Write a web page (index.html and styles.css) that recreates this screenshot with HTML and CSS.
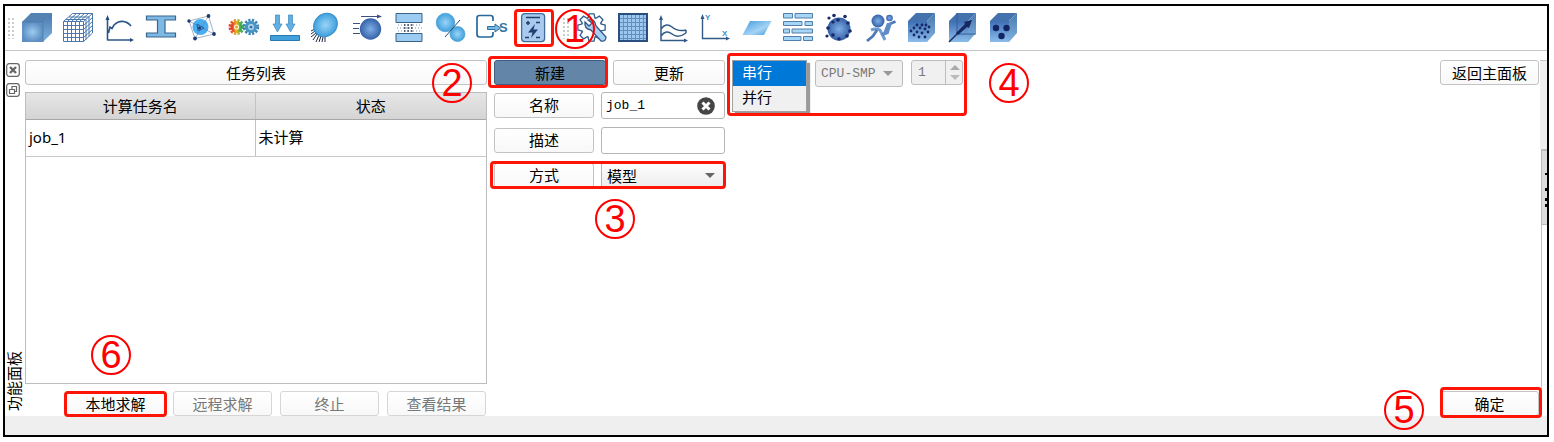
FILE: index.html
```html
<!DOCTYPE html>
<html lang="zh-CN">
<head>
<meta charset="utf-8">
<title>任务列表</title>
<link rel="stylesheet" href="styles.css">
</head>
<body>
<svg class="defs" width="0" height="0" aria-hidden="true">
  <defs>
    <radialGradient id="soft"><stop offset="0" stop-color="#9ccbef"/><stop offset="1" stop-color="#5d8fc2"/></radialGradient>
    <linearGradient id="side" x1="0" y1="0" x2="0" y2="1"><stop offset="0" stop-color="#4878ae"/><stop offset="1" stop-color="#7fb2df"/></linearGradient>
    <radialGradient id="sky"><stop offset="0" stop-color="#9bd4f8"/><stop offset="1" stop-color="#3fa0dc"/></radialGradient>
    <linearGradient id="deep" x1="0" y1="0" x2="0" y2="1"><stop offset="0" stop-color="#3f6fb5"/><stop offset="1" stop-color="#8bbdea"/></linearGradient>
    <radialGradient id="ball"><stop offset="0" stop-color="#7fb0e6"/><stop offset="1" stop-color="#3560a8"/></radialGradient>
    <linearGradient id="plane" x1="0" y1="0" x2="1" y2="1"><stop offset="0" stop-color="#3d9bdc"/><stop offset=".6" stop-color="#a5d3f5"/><stop offset="1" stop-color="#3d9bdc"/></linearGradient>
    <linearGradient id="warm"><stop offset="0" stop-color="#e5402c"/><stop offset=".5" stop-color="#e9b51e"/><stop offset="1" stop-color="#36a85a"/></linearGradient>
    <g id="cube"><path d="M1 8 9 0H28L20 8Z" fill="#4472ac"/><path d="M20 8 28 0V20L20 29Z" fill="url(#side)"/><path d="M1 8H20V29H1Z" fill="url(#deep)"/></g>
    <g id="teeth"><path id="tooth" d="M11.500 6 12.500 1.500H16.500L17.500 6Z"/><use href="#tooth" transform="rotate(45 14.500 14.500)"/><use href="#tooth" transform="rotate(90 14.500 14.500)"/><use href="#tooth" transform="rotate(135 14.500 14.500)"/><use href="#tooth" transform="rotate(180 14.500 14.500)"/><use href="#tooth" transform="rotate(225 14.500 14.500)"/><use href="#tooth" transform="rotate(270 14.500 14.500)"/><use href="#tooth" transform="rotate(315 14.500 14.500)"/><circle cx="14.500" cy="14.500" r="9.500"/></g>
  </defs>
</svg>

<div class="window">
  <header class="toolbar">
    <span class="grip"></span>
    <nav class="tools tools-main">
      <button class="tool" aria-label="几何"><svg viewBox="0 0 30 30"><path d="M0 9 9 0H30L21 9Z" fill="#5482b2"/><path d="M21 9 30 0V20L21 29Z" fill="url(#side)"/><path d="M0 9H21V29H0Z" fill="url(#soft)"/><path d="M0 9H21V29M21 9 30 0" fill="none" stroke="#4a79aa" stroke-width=".7"/></svg></button>
      <button class="tool" aria-label="网格"><svg viewBox="0 0 30 30"><path d="M.5 8.500H20.500V28.500H.5ZM.5 8.500 9.500.5H29.500L20.500 8.500M29.500.5V20L20.500 28.500M4.500 8.500V28.500M8.500 8.500V28.500M12.500 8.500V28.500M16.500 8.500V28.500M.5 12.500H20.500L29.500 4.500M.5 16.500H20.500L29.500 8.500M.5 20.500H20.500L29.500 12.500M.5 24.500H20.500L29.500 16.500M4.500 8.500 13.500.5M8.500 8.500 17.500.5M12.500 8.500 21.500.5M16.500 8.500 25.500.5M3 6.500H23V26.500M6 4H26V23.500" fill="none" stroke="#4878ac"/></svg></button>
      <button class="tool" aria-label="曲线"><svg viewBox="0 0 30 30"><path d="M3.500 27.500V5M3.500 27H28M4.500 20 6 14 8 15.500 10 12C15 7 22 7 27 13" fill="none" stroke="#2c5688" stroke-width="1.600"/><path d="M3.500 2 5.500 7H1.500ZM30 27 26 29V25Z" fill="#234b80"/></svg></button>
      <button class="tool" aria-label="截面"><svg viewBox="0 0 30 30"><path d="M.5 3.500H29.500V7.500H19V20.500H29.500V24.500H.5V20.500H11.500V7.500H.5Z" transform="translate(0 -.5)" fill="#7eb9e4" stroke="#38658d" stroke-width="1.200"/></svg></button>
      <button class="tool" aria-label="质点"><svg viewBox="0 0 30 30"><circle cx="13.500" cy="14" r="8" fill="#47aef2"/><path d="M2 8 21.500 3 27 21 8 25.500ZM2 8 27 21M21.500 3 8 25.500" fill="none" stroke="#657b9d" stroke-width=".6"/><path d="m10 11 7 4-6 3Z" fill="none" stroke="#245eaa"/><g fill="#1e3974"><circle cx="2" cy="8" r="1.700"/><circle cx="21.500" cy="3" r="1.900"/><circle cx="27" cy="21" r="1.900"/><circle cx="8" cy="25.500" r="1.900"/><circle cx="12.500" cy="15" r="1.500"/></g></svg></button>
      <button class="tool" aria-label="装配"><svg viewBox="0 0 30 30"><circle cx="7.500" cy="14" r="6" fill="none" stroke="url(#warm)" stroke-width="4" stroke-dasharray="2 1.140"/><circle cx="7.500" cy="14" r="4.300" fill="#fbf6d8" stroke="url(#warm)" stroke-width="3.400"/><circle cx="7.500" cy="14" r="1.500" fill="#e8a32a"/><circle cx="22" cy="14" r="6.200" fill="none" stroke="#3a84b5" stroke-width="4" stroke-dasharray="2 1.250"/><circle cx="22" cy="14" r="4.500" fill="#b9dcf0" stroke="#4b95c5" stroke-width="3.200"/><circle cx="22" cy="14" r="1.600" fill="#3475aa"/></svg></button>
      <button class="tool" aria-label="载荷"><svg viewBox="0 0 30 30"><path d="M5.500 2H9.500V11H12L7.500 19 3 11H5.500ZM18.500 2H22.500V11H25L20.500 19 16 11H18.500Z" fill="#62afe2" stroke="#3a86bd" stroke-width=".7"/><path d="M.5 22.500H29.500V27.500H.5Z" fill="#42a0dc" stroke="#2977af"/></svg></button>
      <button class="tool" aria-label="约束"><svg viewBox="0 0 30 30"><path d="M4 16 0 18M4 18 0 21M5 20 0 24M6 21 2 27M8 22 5 29M10 23 8 29M12 24 11 29M14 24V29" stroke="#1e2940"/><ellipse cx="14.500" cy="12" rx="12.500" ry="11" transform="rotate(-42 14.500 12)" fill="url(#sky)" stroke="#348dc8"/></svg></button>
      <button class="tool" aria-label="初始条件"><svg viewBox="0 0 30 30"><circle cx="17.500" cy="16" r="10.700" fill="url(#ball)"/><path d="M8 3.500H25M0 10.500H7M0 15.500H6M0 20.500H7" stroke="#3e4f83" stroke-width="1.200"/><path d="m24 1.500 5 2-5 2Z" fill="#3e4f83"/></svg></button>
      <button class="tool" aria-label="接触"><svg viewBox="0 0 30 30"><path d="M2 .5H28V9.500H2ZM2 20.500H28V28.500H2Z" fill="#9dccf2" stroke="#386386"/><path d="M4 12H27M3 15H28M4 18H27" stroke="#7890aa" stroke-dasharray="1 2"/><path d="M10 12H20M10 15H20M10 18H20" stroke="#26364d" stroke-width="1.500" stroke-dasharray="1.500 2"/></svg></button>
      <button class="tool" aria-label="连接"><svg viewBox="0 0 30 30"><circle cx="9.500" cy="9.500" r="9.300" fill="url(#sky)" stroke="#4c9ed0" stroke-width=".7"/><circle cx="21.500" cy="21" r="7.500" fill="url(#sky)" stroke="#4c9ed0" stroke-width=".7"/><path d="M9 24 24 7" stroke="#274a70"/></svg></button>
      <button class="tool" aria-label="输出"><svg viewBox="0 0 30 30"><path d="M16 8V5Q16 2.500 13.500 2.500H2.500Q0 2.500 0 5V21Q0 24 2.500 24H13.500Q16 24 16 21V19" fill="none" stroke="#27699c" stroke-width="1.700"/><path d="M10.500 13.500H18V11L23.500 15 18 19V16.500H10.500Z" fill="#78b8e4" stroke="#31719f"/><text x="22" y="19" class="ico-s">S</text></svg></button>
      <span class="marked">
        <button class="tool" aria-label="任务"><svg viewBox="0 0 30 30"><rect x="3.600" y=".6" width="23" height="28" rx="3" fill="#a7caee" stroke="#416d99" stroke-width="1.300"/><path d="M8 4.500H22M8 10H12M10 8V12M18 9.500H22M7 24.500H11M18 24.500H22" stroke="#243d63" stroke-width="1.500"/><path d="M17 11 10 19.500H14.500L13 25 20 16.500H15.500Z" fill="#233f70"/></svg></button>
        <span class="outline outline-job"></span>
        <span class="step step-1">1</span>
      </span>
    </nav>
    <span class="grip"></span>
    <nav class="tools tools-extra">
      <button class="tool" aria-label="设置"><svg viewBox="0 0 30 30"><use href="#teeth" fill="#315d88" stroke="#315d88" stroke-width="2.600"/><use href="#teeth" fill="#fff"/><path d="M8 9 12 13 15 10 11 7Q18 5 19 13L29 24Q29 29 24 28L14 17Q7 16 8 9Z" fill="#a9d0f3" stroke="#315684" stroke-width="1.300"/></svg></button>
      <button class="tool" aria-label="表格"><svg viewBox="0 0 30 30"><rect x="1" y="1" width="28" height="27" fill="#9cc7ef"/><path d="M5.500 1V28M9.500 1V28M13.500 1V28M17.500 1V28M21.500 1V28M25.500 1V28M1 5.500H29M1 9.500H29M1 13.500H29M1 17.500H29M1 21.500H29M1 25.500H29" stroke="#618fc0"/><rect x="1" y="1" width="28" height="27" fill="none" stroke="#2a4f7e" stroke-width="2"/></svg></button>
      <button class="tool" aria-label="函数"><svg viewBox="0 0 30 30"><path d="M2 4V27.500H27M2 16Q7 9 13 14T27 17M2 23Q7 16 13 21T27 20M27 17V20" fill="none" stroke="#315b86" stroke-width="1.500"/><path d="M2 2 4 7H0ZM29 27.500 25 29.500V25.500Z" fill="#315b86"/></svg></button>
      <button class="tool" aria-label="坐标系"><svg viewBox="0 0 30 30"><path d="M2.500 4V25.500H27" fill="none" stroke="#315b86" stroke-width="1.400"/><path d="M2.500 1 4.500 6H.5ZM30 25.500 26 27.500V23.500Z" fill="#315b86"/><text x="5" y="7" class="ico-axis">Y</text><text x="22" y="23" class="ico-axis">X</text></svg></button>
      <button class="tool" aria-label="平面"><svg viewBox="0 0 30 30"><path d="M8 8H29.500L22 22H.5Z" fill="url(#plane)"/></svg></button>
      <button class="tool" aria-label="墙体"><svg viewBox="0 0 30 30"><g fill="#a5d5f7" stroke="#527fa7"><path d="M.5.5H9.500V5H.5ZM12 .5H29.500V5H12ZM.5 8.500H19V12.500H.5ZM22 8.500H29.500V12.500H22ZM.5 16H6.500V20H.5ZM9 16H29.500V20H9ZM.5 23.500H18V27.500H.5ZM20.500 23.500H29.500V27.500H20.500Z"/></g></svg></button>
      <button class="tool" aria-label="粒子"><svg viewBox="0 0 30 30"><circle cx="15" cy="16" r="11.500" fill="url(#ball)"/><g fill="#1a2a68"><circle cx="10" cy="2.500" r="1.800"/><circle cx="5" cy="5" r="1.600"/><circle cx="21" cy="3.500" r="1.800"/><circle cx="14" cy="7" r="1.800"/><circle cx="9" cy="9" r="1.600"/><circle cx="24" cy="10" r="1.800"/><circle cx="4" cy="15" r="1.800"/><circle cx="26" cy="18" r="1.800"/><circle cx="9" cy="22" r="1.800"/><circle cx="3" cy="23" r="1.600"/><circle cx="15" cy="26" r="1.800"/><circle cx="23" cy="23" r="1.800"/></g></svg></button>
      <button class="tool" aria-label="假人"><svg viewBox="0 0 30 30"><circle cx="12" cy="8" r="6.500" fill="url(#ball)"/><circle cx="23.500" cy="5" r="3.300" fill="url(#ball)"/><path d="M5 17Q10 15 14 17L19 27" fill="none" stroke="#6d9bd2" stroke-width="3"/><path d="M11 17 7 23 1 28M16.500 21.500 20 20 23.500 11 29.500 8.500" fill="none" stroke="#4d79b6" stroke-width="2.800"/><path d="M21 10H26L22.500 21 16 23Z" fill="#5f8cc6"/></svg></button>
      <button class="tool" aria-label="体粒子"><svg viewBox="0 0 30 30"><use href="#cube"/><g fill="#17296a"><circle cx="10" cy="12" r="1.400"/><circle cx="15" cy="12" r="1.400"/><circle cx="19" cy="12" r="1.400"/><circle cx="7" cy="15" r="1.400"/><circle cx="13" cy="15" r="1.400"/><circle cx="18" cy="16" r="1.400"/><circle cx="22" cy="14" r="1.400"/><circle cx="4" cy="18" r="1.400"/><circle cx="10" cy="19" r="1.400"/><circle cx="15" cy="20" r="1.400"/><circle cx="21" cy="19" r="1.400"/><circle cx="7" cy="22" r="1.400"/><circle cx="12" cy="24" r="1.400"/><circle cx="18" cy="24" r="1.400"/></g></svg></button>
      <button class="tool" aria-label="方向"><svg viewBox="0 0 30 30"><use href="#cube"/><path d="M9 0V21H28M9 21 1 29" fill="none" stroke="#355d9b"/><path d="M1 29 15 15" stroke="#1d2b60" stroke-width="1.500"/><path d="m8 20 9-9-1-2 8-2-3 8-2-1-9 8Z" fill="#17275f"/></svg></button>
      <button class="tool" aria-label="多孔"><svg viewBox="0 0 30 30"><use href="#cube"/><g fill="#122464"><circle cx="7" cy="15" r="3.200"/><circle cx="17.500" cy="15" r="3.200"/><circle cx="12.500" cy="23" r="3.200"/></g></svg></button>
    </nav>
  </header>

  <div class="work">
    <aside class="rail">
      <button class="rail-btn" aria-label="关闭"><svg viewBox="0 0 14 14"><rect x=".7" y=".7" width="12.600" height="12.600" rx="2.500"/><path d="m4 4 6 6M10 4 4 10" stroke-width="2.400"/></svg></button>
      <button class="rail-btn" aria-label="浮动"><svg viewBox="0 0 14 14"><rect x=".7" y=".7" width="12.600" height="12.600" rx="2.500"/><path d="M3.500 6.500H8.500V10.500H3.500ZM6 6V3.500H10.500V8.500H9"/></svg></button>
      <span class="rail-title">功能面板</span>
    </aside>

    <section class="jobs">
      <button class="btn">任务列表</button>
      <div class="table-box">
        <table class="job-table">
          <thead><tr><th>计算任务名</th><th>状态</th></tr></thead>
          <tbody><tr><td>job_1</td><td>未计算</td></tr></tbody>
        </table>
      </div>
      <div class="actions">
        <span class="marked">
          <button class="btn btn-fixed">本地求解</button>
          <span class="outline outline-solve"></span>
          <span class="step step-6">6</span>
        </span>
        <button class="btn btn-fixed" disabled>远程求解</button>
        <button class="btn btn-fixed" disabled>终止</button>
        <button class="btn btn-fixed" disabled>查看结果</button>
      </div>
    </section>

    <form class="job-form">
      <div class="modes">
        <span class="marked">
          <button type="button" class="btn btn-active">新建</button>
          <span class="outline outline-new"></span>
          <span class="step step-2">2</span>
        </span>
        <button type="button" class="btn">更新</button>
      </div>
      <div class="fields">
        <div class="field">
          <label class="btn" for="name">名称</label>
          <span class="control"><input class="box mono" id="name" type="text" value="job_1"><button type="button" class="clear" aria-label="清除"><svg viewBox="0 0 18 18"><circle cx="9" cy="9" r="8.800" fill="#454545"/><path d="m5.500 5.500 7 7M12.500 5.500 5.500 12.500" stroke="#fff" stroke-width="3"/></svg></button></span>
        </div>
        <div class="field">
          <label class="btn" for="desc">描述</label>
          <span class="control"><input class="box mono" id="desc" type="text"></span>
        </div>
        <div class="field marked">
          <label class="btn" for="mode">方式</label>
          <span class="control arrow"><select class="box drop" id="mode"><option>模型</option></select></span>
          <span class="outline outline-mode"></span>
          <span class="step step-3">3</span>
        </div>
      </div>
    </form>

    <div class="parallel marked">
      <select class="list" size="2" aria-label="求解方式"><option selected>串行</option><option>并行</option></select>
      <span class="control arrow cpu"><select class="box drop mono" aria-label="并行类型" disabled><option>CPU-SMP</option></select></span>
      <span class="control count"><input class="box mono" type="number" value="1" aria-label="核数" disabled><span class="spin"></span></span>
      <span class="outline outline-parallel"></span>
      <span class="step step-4">4</span>
    </div>

    <div class="side">
      <button class="btn btn-fixed">返回主面板</button>
      <span class="marked">
        <button class="btn btn-fixed">确定</button>
        <span class="outline outline-ok"></span>
        <span class="step step-5">5</span>
      </span>
    </div>

    <div class="edge">
      <span class="edge-gap"></span>
      <span class="edge-tab"><svg viewBox="0 0 2 40"><path d="M0 4H2V6H0ZM0 19H2V22H0ZM0 29H2V32H0ZM0 35H2V38H0Z"/></svg></span>
      <span class="edge-line"></span>
    </div>
  </div>
  <footer class="status"></footer>
</div>
</body>
</html>
```

FILE: styles.css
```css
* { box-sizing: border-box; }

body {
  margin: 0;
  padding: 4px 5px 5px 3px;
  min-height: 100vh;
  display: flex;
  background: #fff;
  color: #000;
  font: 15px/20px "Noto Sans CJK SC", sans-serif;
}

button, input, select { font: inherit; color: inherit; margin: 0; }
.defs { position: absolute; }

.window {
  flex: 1;
  min-width: 0;
  display: flex;
  flex-direction: column;
  border: 2px solid #000;
}

/* toolbar */
.toolbar {
  display: flex;
  align-items: center;
  height: 45px;
  padding-left: 2px;
  border-bottom: 1px solid #c6c6c6;
}
.grip {
  width: 7px;
  height: 22px;
  background: radial-gradient(circle, #ccc 1px, transparent 1px) 0 0 / 4px 4px;
}
.tools { display: grid; grid-auto-flow: column; grid-auto-columns: 1fr; margin-left: 2px; }
.tools-main { width: 538px; margin-right: 8px; }
.tools-extra { width: 454px; }
.tool {
  display: flex;
  justify-content: center;
  width: 100%;
  padding: 0;
  border: 0;
  background: none;
}
.tool svg { width: 30px; height: 30px; overflow: visible; flex: none; }
.ico-s { font: bold 13px "Liberation Sans", sans-serif; fill: #3475a5; }
.ico-axis { font: bold 8px "Liberation Sans", sans-serif; fill: #3c93d0; }

/* work area */
.work { flex: 1; display: flex; }

.rail {
  display: flex;
  flex-direction: column;
  gap: 6px;
  width: 20px;
  padding: 12px 1px 5px;
}
.rail-btn { width: 14px; height: 14px; padding: 0; border: 0; background: none; }
.rail-btn svg { display: block; fill: none; stroke: #666; stroke-width: 1.200; }
.rail-title {
  margin-top: auto;
  line-height: 16px;
  writing-mode: vertical-rl;
  text-orientation: sideways;
  transform: rotate(180deg);
}

.btn {
  display: block;
  width: 100%;
  height: 25px;
  padding: 0;
  border: 1px solid #c3c3c3;
  border-radius: 3px;
  background: linear-gradient(#fff, #f8f8f8);
  line-height: 22px;
  text-align: center;
  white-space: nowrap;
}
.btn:disabled { color: #787878; border-color: #d6d6d6; }
.btn-fixed { width: 99px; }
.btn-active { background: #6385a8; border-color: #3f5f80; }

.jobs { display: flex; flex-direction: column; gap: 7px; width: 462px; padding-top: 9px; }
.table-box { flex: 1; border: 1px solid #bdbdbd; }
.job-table { width: 100%; border-collapse: collapse; table-layout: fixed; }
.job-table th {
  height: 26px;
  padding: 0;
  border-bottom: 1px solid #a8a8a8;
  background: linear-gradient(#e6e6e6, #d4d4d4);
  font-weight: 400;
}
.job-table th:first-child { width: 229px; }
.job-table td {
  height: 37px;
  padding: 0 3px 2px;
  border-bottom: 1px solid #c8c8c8;
  font-family: "Noto Sans", "Noto Sans CJK SC", sans-serif;
}
.job-table th + th, .job-table td + td { border-left: 1px solid #c2c2c2; }
.actions { display: flex; justify-content: flex-end; gap: 8px; padding-right: 1px; }

/* form */
.job-form { display: flex; flex-direction: column; gap: 7px; width: 231px; margin-left: 7px; padding-top: 9px; }
.modes { display: grid; grid-template-columns: 1fr 1fr; gap: 7px; }
.fields { display: flex; flex-direction: column; gap: 8px; }
.field { display: grid; grid-template-columns: 100px 1fr; gap: 7px; align-items: center; }
.control { position: relative; display: block; }
.box {
  display: block;
  width: 100%;
  height: 27px;
  padding: 0 4px;
  border: 1px solid #b5b5b5;
  border-radius: 3px;
  background: #fff;
  outline: 0;
  appearance: none;
}
.drop { padding: 0 5px; background: linear-gradient(#fefefe, #ececec); }
.mono { font-family: "Liberation Mono", monospace; font-size: 13px; }
.box:disabled { background: #f0f0f0; color: #787878; border-color: #bdbdbd; opacity: 1; }
.clear { position: absolute; top: 5px; right: 10px; width: 18px; height: 18px; padding: 0; border: 0; background: none; }
.clear svg { display: block; }
.arrow::after {
  content: "";
  position: absolute;
  top: 11px;
  right: 10px;
  border: 5px solid transparent;
  border-top-color: #666;
  border-bottom: 0;
}

.parallel { display: flex; gap: 8px; align-self: flex-start; margin: 9px 0 0 7px; }
.list {
  width: 75px;
  height: 52px;
  padding: 0;
  border: 1px solid #a0a0a0;
  border-radius: 0;
  background: #f0f0f0;
  box-shadow: 3px 3px 1px #9a9a9a;
  overflow: hidden;
  outline: 0;
  appearance: none;
}
.list option { height: 25px; min-height: 25px; padding: 0 9px; line-height: 25px; }
.list option:checked { background: linear-gradient(#0078d7, #0078d7); color: #fff; }
.cpu { width: 88px; }
.cpu::after { border-top-color: #999; }
.count { width: 52px; }
.count .box { height: 25px; padding: 0 6px; }
.count .box::-webkit-inner-spin-button { display: none; }
.spin { position: absolute; top: 1px; right: 0; width: 18px; height: 23px; border-left: 1px solid #bdbdbd; }
.spin::before, .spin::after { content: ""; position: absolute; left: 4px; border: 5px solid transparent; }
.spin::before { top: 4px; border-top: 0; border-bottom-color: #aaa; }
.spin::after { bottom: 4px; border-bottom: 0; border-top-color: #bbb; }

.side {
  display: flex;
  flex-direction: column;
  justify-content: space-between;
  margin-left: auto;
  padding-top: 9px;
}
.edge { display: flex; flex-direction: column; width: 7px; margin-left: 1px; padding: 9px 0 27px; }
.edge-gap { height: 89px; border-top: 1px solid #c3c3c3; background: #efefef; }
.edge-tab {
  display: flex;
  justify-content: flex-end;
  height: 76px;
  margin-left: 1px;
  padding-top: 18px;
  border: 1px solid #bbb;
  border-right: 0;
  border-top-width: 2px;
  background: #dcdcdc;
}
.edge-tab svg { width: 2px; height: 40px; }
.edge-line { flex: 1; margin-left: 1px; border-left: 1px solid #c3c3c3; }
.status { height: 19px; background: #efefef; }

/* walkthrough marks */
.marked { position: relative; }
.outline {
  position: absolute;
  z-index: 1;
  border: 3px solid #ff1408;
  border-radius: 4px;
  pointer-events: none;
}
.step {
  position: absolute;
  z-index: 2;
  width: 40px;
  height: 40px;
  border: 2px solid #f00;
  border-radius: 50%;
  color: #f00;
  font: 38px/36px "Liberation Sans", Arial, sans-serif;
  text-align: center;
}
.outline-job { inset: -4px 0 -4px 1px; }
.outline-new { inset: -4px -2px -3px -6px; }
.outline-mode { inset: -1px -1px 0 -4px; }
.outline-parallel { inset: -7px -4px -4px -5px; }
.outline-solve { inset: 0 -2px -1px -2px; }
.outline-ok { inset: -4px -3px -2px 0; }
.step-1 { top: -4px; left: 42px; }
.step-2 { top: 3px; left: -62px; }
.step-3 { top: 37px; left: 101px; }
.step-4 { top: 3px; right: -66px; }
.step-5 { top: -1px; left: -56px; }
.step-6 { top: -56px; left: 25px; }
```
